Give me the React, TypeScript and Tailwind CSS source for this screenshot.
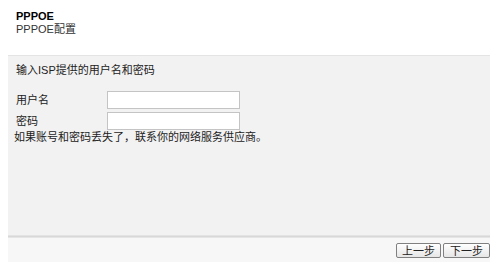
import React from "react";

export default function App() {
  return (
    <div
      className="w-[500px] h-[262px] bg-white flex flex-col text-[11px] text-[#222] overflow-hidden"
      style={{ fontFamily: '"Liberation Sans", "Noto Sans CJK SC", sans-serif' }}
    >
      <div className="pl-[16px] pt-[10px] h-[55px]">
        <div className="font-bold leading-[13px] text-black">PPPOE</div>
        <div className="leading-[12px] text-[#333]">PPPOE配置</div>
      </div>
      <div className="ml-[8px] w-[482px] flex-1 flex flex-col bg-[#f7f7f7]">
        <div className="h-[180px] bg-[#f2f2f2] border-t border-[#e4e4e4] pl-[8px] pt-[7px] flex flex-col">
          <div className="leading-[14px]">输入ISP提供的用户名和密码</div>
          <div className="mt-[14px] flex items-center h-[18px]">
            <div className="w-[91px] leading-[14px]">用户名</div>
            <input className="w-[133px] h-[18px] bg-white border border-[#c4c4c4] outline-none" />
          </div>
          <div className="mt-[3px] flex items-center h-[18px]">
            <div className="w-[91px] leading-[14px]">密码</div>
            <input type="password" className="w-[133px] h-[18px] bg-white border border-[#c4c4c4] outline-none" />
          </div>
          <div className="-ml-[2px] mt-[1px] leading-[12px]">如果账号和密码丢失了，联系你的网络服务供应商。</div>
        </div>
        <div className="h-[3px] bg-gradient-to-b from-[#e8e8e8] via-[#d8d8d8] to-[#ececec]" />
        <div className="flex justify-end gap-[2px] pt-[5px]">
          <button className="w-[45px] h-[15px] border border-[#808080] rounded-[2px] bg-gradient-to-b from-white to-[#e6e6e6] text-[11px] leading-[12px] text-[#222]">
            上一步
          </button>
          <button className="w-[47px] h-[15px] border border-[#808080] rounded-[2px] bg-gradient-to-b from-white to-[#e6e6e6] text-[11px] leading-[12px] text-[#222]">
            下一步
          </button>
        </div>
      </div>
    </div>
  );
}
